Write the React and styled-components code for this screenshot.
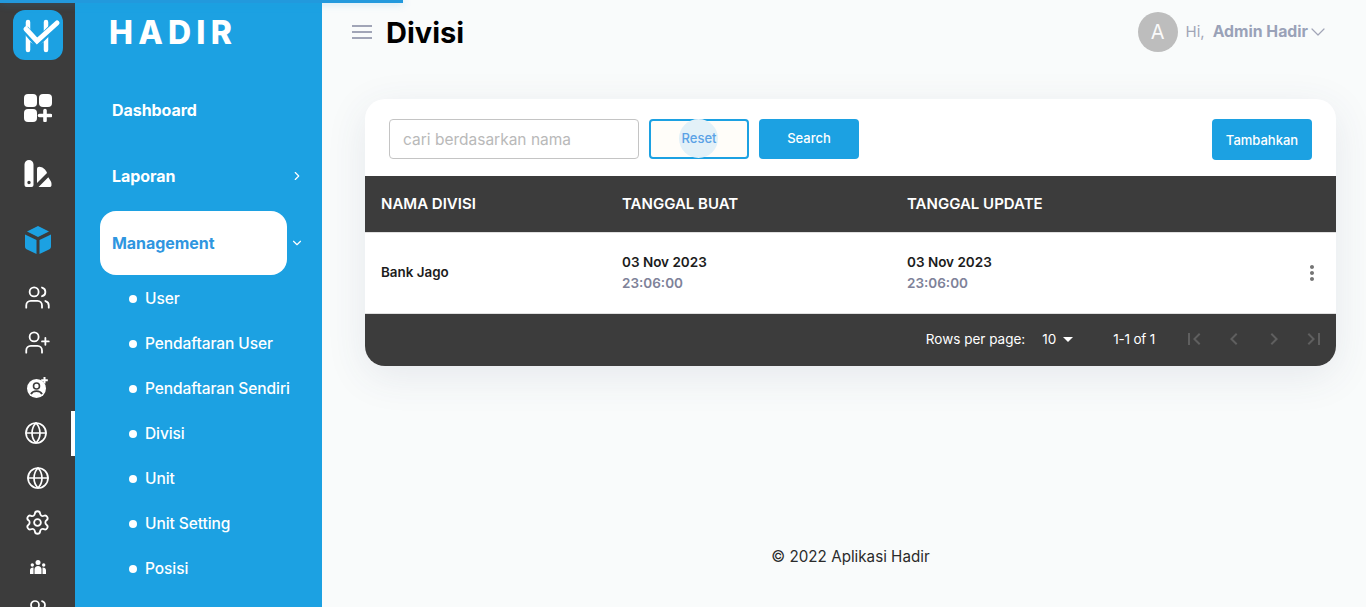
import React from "react";
import styled, { createGlobalStyle } from "styled-components";
import { Users, UserPlus, Globe, Settings, ChevronRight, ChevronDown } from "lucide-react";
import { MdFirstPage, MdLastPage, MdChevronLeft, MdChevronRight, MdArrowDropDown, MdMoreVert } from "react-icons/md";

const GlobalStyle = createGlobalStyle`
  html, body {
    margin: 0;
    padding: 0;
    height: 607px;
    overflow: hidden;
    font-family: "Inter", "Liberation Sans", sans-serif;
    background: #f9fbfb;
  }
  * { box-sizing: border-box; }
`;

const Page = styled.div`
  display: flex;
  height: 607px;
  position: relative;
  overflow: hidden;
`;
const ProgressBar = styled.div`
  position: absolute;
  top: 0;
  left: 0;
  width: 403px;
  height: 3px;
  background: #2299dd;
  box-shadow: 0 0 8px rgba(34, 153, 221, 0.4);
  z-index: 5;
`;
const Rail = styled.nav`
  width: 75px;
  flex-shrink: 0;
  background: #3c3c3c;
  padding-top: 10px;
  display: flex;
  flex-direction: column;
  color: #fff;
`;
const LogoBox = styled.div`
  width: 50px;
  height: 50px;
  margin: 0 0 15px 13px;
  border-radius: 12px;
  background: #1ca1e2;
`;
const RailSlot = styled.div`
  height: ${(p) => p.$h || 45}px;
  flex-shrink: 0;
  display: flex;
  align-items: center;
  justify-content: center;
  position: relative;
  margin-top: ${(p) => p.$mt || 0}px;
  padding-bottom: ${(p) => p.$pb || 0}px;
  padding-right: ${(p) => (p.$active ? 3 : 0)}px;
  &::after {
    content: "";
    display: ${(p) => (p.$active ? "block" : "none")};
    position: absolute;
    right: 0;
    top: 0;
    bottom: 0;
    width: 4px;
    background: #fff;
  }
`;
const Menu = styled.aside`
  width: 247px;
  flex-shrink: 0;
  background: #1ca1e2;
  color: #fff;
  display: flex;
  flex-direction: column;
`;
const Brand = styled.div`
  height: 78px;
  padding: 14px 0 0 34px;
  font-size: 32px;
  line-height: 38px;
  font-weight: 800;
  letter-spacing: 5.2px;
`;
const MenuItem = styled.div`
  height: 64px;
  margin: ${(p) => (p.$active ? "1px 0 1px 25px" : "0 16px 2px 25px")};
  width: ${(p) => (p.$active ? "187px" : "auto")};
  padding-left: 12px;
  display: flex;
  align-items: center;
  justify-content: space-between;
  position: relative;
  border-radius: 16px;
  background: ${(p) => (p.$active ? "#fff" : "transparent")};
  color: ${(p) => (p.$active ? "#2f96e0" : "#fff")};
  font-size: 16px;
  font-weight: 700;
  letter-spacing: -0.05px;
  svg { display: block; }
`;
const ItemCaret = styled.span`
  margin-right: 2px;
`;
const Caret = styled.span`
  position: absolute;
  right: -17px;
  top: 25px;
  color: #fff;
`;
const SubItem = styled.div`
  height: 45px;
  padding-left: 54px;
  display: flex;
  align-items: center;
  gap: 8px;
  font-size: 15.5px;
  font-weight: 500;
  letter-spacing: -0.08px;
  white-space: nowrap;
  &::before {
    content: "";
    width: 8px;
    height: 8px;
    border-radius: 50%;
    background: #fff;
  }
`;
const Main = styled.main`
  flex: 1;
  min-width: 0;
  display: flex;
  flex-direction: column;
`;
const TopBar = styled.header`
  height: 99px;
  padding: 12px 30px 0 30px;
  display: flex;
  align-items: flex-start;
  justify-content: space-between;
`;
const TitleGroup = styled.div`
  display: flex;
  align-items: center;
  gap: 14px;
  height: 40px;
`;
const Title = styled.h1`
  margin: 0;
  padding-top: 2px;
  font-size: 29px;
  line-height: 40px;
  font-weight: 700;
  color: #000;
`;
const UserBox = styled.div`
  display: flex;
  align-items: center;
  height: 40px;
  margin-right: 6px;
  color: #a1a5b7;
  font-size: 15px;
  line-height: 38px;
`;
const Avatar = styled.div`
  width: 40px;
  height: 40px;
  border-radius: 50%;
  background: #bdbdbd;
  color: #fafafa;
  font-size: 20px;
  display: flex;
  align-items: center;
  justify-content: center;
  margin-right: 8px;
`;
const UserName = styled.span`
  font-weight: 700;
  font-size: 15.8px;
  margin: 0 -2px 0 8px;
  color: #9aa2b8;
`;
const Card = styled.section`
  margin: 0 30px 0 43px;
  height: 267px;
  background: #fff;
  border-radius: 20px;
  box-shadow: 0 10px 40px rgba(60, 70, 110, 0.1);
  overflow: hidden;
  display: flex;
  flex-direction: column;
`;
const Toolbar = styled.div`
  height: 77px;
  flex-shrink: 0;
  padding: 20px 24px 0;
  display: flex;
  align-items: flex-start;
  gap: 10px;
`;
const SearchInput = styled.input`
  width: 250px;
  height: 40px;
  border: 1px solid #c4c4c4;
  border-radius: 4px;
  padding: 0 13px;
  font: 400 15.5px "Inter", sans-serif;
  color: #333;
  outline: none;
  &::placeholder { color: #b9b9b9; opacity: 1; }
`;
const Button = styled.button`
  width: 100px;
  height: ${(p) => (p.$tall ? 41 : 40)}px;
  margin-left: ${(p) => (p.$push ? "auto" : 0)};
  padding: 0 0 ${(p) => (p.$tall ? 0 : 2)}px;
  border-radius: 4px;
  border: ${(p) => (p.$outline ? "2px solid #1ca1e2" : "none")};
  background: ${(p) => (p.$outline ? "#fffdf9" : "#1ca1e2")};
  color: ${(p) => (p.$outline ? "#5aa2e6" : "#fff")};
  font: 500 13px "Inter", sans-serif;
  position: relative;
  z-index: 0;
  &::before {
    content: "";
    display: ${(p) => (p.$outline ? "block" : "none")};
    position: absolute;
    left: 50%;
    top: 50%;
    width: 39px;
    height: 39px;
    margin: -20px 0 0 -20px;
    border-radius: 50%;
    background: #e3f1f8;
    z-index: -1;
  }
`;
const Grid = styled.div`
  display: grid;
  grid-template-columns: 241px 285px 1fr 48px;
`;
const HeadRow = styled(Grid)`
  height: 57px;
  flex-shrink: 0;
  padding-bottom: 2px;
  background: #3c3c3c;
  color: #fff;
  align-items: center;
  font-size: 15px;
  font-weight: 600;
  border-bottom: 1px solid #e0e0e0;
`;
const BodyRow = styled(Grid)`
  height: 81px;
  flex-shrink: 0;
  align-items: center;
  border-bottom: 1px solid #e0e0e0;
`;
const Cell = styled.div`
  padding-left: 16px;
  padding-bottom: ${(p) => p.$pb || 0}px;
  font-size: 13.4px;
  font-weight: 600;
  color: #1c1c1c;
`;
const HeadCell = styled.div`
  padding-left: 16px;
`;
const DateLine = styled.div`
  font-size: 13.5px;
  line-height: 21px;
  font-weight: 600;
  color: ${(p) => (p.$muted ? "#7e8299" : "#1c1c1c")};
`;
const ActionCell = styled.div`
  color: #757575;
  display: flex;
  justify-content: center;
`;
const Pager = styled.div`
  flex: 1;
  background: #3c3c3c;
  color: #fff;
  display: flex;
  align-items: center;
  justify-content: flex-end;
  padding: 0 2px 2px 0;
  font-size: 13.5px;
  svg { display: block; }
`;
const RowsValue = styled.span`
  display: flex;
  align-items: center;
  margin: 0 26px 0 17px;
  width: 45px;
`;
const PagerButton = styled.span`
  width: 40px;
  display: flex;
  justify-content: center;
  color: #5f5f5f;
`;
const PagerCount = styled.span`
  margin-right: 19px;
  letter-spacing: -0.2px;
`;
const Footer = styled.footer`
  margin-top: 181px;
  margin-left: 43px;
  width: 971px;
  text-align: center;
  font-size: 15.2px;
  color: #2b2b2b;
`;

function LogoMark() {
  return (
    <svg width="50" height="50" viewBox="0 0 50 50">
      <path d="M15 12v28M33 12v28" stroke="#fff" strokeWidth="4.5" strokeLinecap="round" />
      <path d="M15 29.500 24 35 33 29.500" stroke="#fff" strokeWidth="2" fill="none" />
      <path d="M12 19 24 33 45 12" stroke="#1ca1e2" strokeWidth="7.500" fill="none" />
      <path d="M13 19 24 31 44 13" stroke="#fff" strokeWidth="5" strokeLinecap="round" fill="none" />
    </svg>
  );
}

function AppsIcon() {
  return (
    <svg width="28" height="28" viewBox="0 0 28 28" fill="#fff">
      <rect x="0" y="0" width="13" height="13" rx="4" />
      <rect x="15" y="0" width="13" height="13" rx="4" />
      <rect x="0" y="15" width="13" height="13" rx="4" />
      <path d="M21 16.500v10M15.500 21.500h11" stroke="#fff" strokeWidth="3.600" strokeLinecap="round" />
    </svg>
  );
}

function SwatchIcon() {
  return (
    <svg width="28" height="28" viewBox="0 0 28 28" fill="#fff">
      <path d="M5 0a4.500 4.500 0 0 1 4.500 4.500V25a2 2 0 0 1-2 2H2.500a2 2 0 0 1-2-2V4.500A4.500 4.500 0 0 1 5 0zm0 20.800a1.700 1.700 0 1 0 0 3.400 1.700 1.700 0 0 0 0-3.400z" fillRule="evenodd" />
      <path d="M13 9c0-1.500 1-2.200 2.300-2.200 3.200 0 6.700 3 7.700 6.200L13 23z" />
      <path d="M14.500 27 24.300 17.300 26.800 21.200c.8 1.200.7 2.800.7 3.800 0 1.400-.8 2-2 2z" />
    </svg>
  );
}

function CubeIcon() {
  return (
    <svg width="26" height="28" viewBox="0 0 26 28" fill="#1ca1e2">
      <path d="M13 0 24 5.500 13 11 2 5.500z" />
      <path d="M0 8.500 11.500 14v14L2 23.500c-1.300-.6-2-1.500-2-3z" />
      <path d="M26 8.500 14.500 14v14L24 23.500c1.300-.6 2-1.500 2-3z" />
    </svg>
  );
}

function PersonPlusIcon() {
  return (
    <svg width="24" height="24" viewBox="0 0 24 24" fill="none">
      <circle cx="10.500" cy="12.500" r="9.500" fill="#fff" />
      <circle cx="10.500" cy="10" r="3" stroke="#3c3c3c" strokeWidth="1.600" />
      <path d="M5 18.200c1-2.200 3-3 5.500-3s4.500.8 5.500 3" stroke="#3c3c3c" strokeWidth="1.800" />
      <path d="M18.500 1v6.500M15.200 4.200h6.600" stroke="#fff" strokeWidth="2" />
    </svg>
  );
}

function TeamIcon() {
  return (
    <svg width="16" height="14" viewBox="0 0 16 14" fill="#fff">
      <circle cx="8" cy="2.500" r="2.500" />
      <circle cx="2.300" cy="5" r="1.700" />
      <circle cx="13.700" cy="5" r="1.700" />
      <path d="M4.500 14V9.500C4.500 7.500 6 6 8 6s3.500 1.500 3.500 3.500V14z" />
      <path d="M0 14v-3.500C0 8.500 1 7.500 3.500 7.500V14zM16 14v-3.500c0-2-1-3-3.500-3V14z" />
    </svg>
  );
}

function MenuIcon() {
  return (
    <svg width="20" height="14" viewBox="0 0 20 14" fill="#a1a5b7">
      <rect y="0" width="20" height="2" />
      <rect y="6" width="20" height="2" />
      <rect y="12" width="20" height="2" />
    </svg>
  );
}

const subItems = ["User", "Pendaftaran User", "Pendaftaran Sendiri", "Divisi", "Unit", "Unit Setting", "Posisi"];

export default function App() {
  return (
    <Page>
      <GlobalStyle />
      <ProgressBar />
      <Rail>
        <LogoBox><LogoMark /></LogoBox>
        <RailSlot $h={66}><AppsIcon /></RailSlot>
        <RailSlot $h={65}><SwatchIcon /></RailSlot>
        <RailSlot $h={67}><CubeIcon /></RailSlot>
        <RailSlot $mt={3} $pb={2}><Users size={27} strokeWidth={1.6} /></RailSlot>
        <RailSlot $pb={2}><UserPlus size={27} strokeWidth={1.6} /></RailSlot>
        <RailSlot $pb={2}><PersonPlusIcon /></RailSlot>
        <RailSlot $pb={2} $active><Globe size={24} strokeWidth={1.7} /></RailSlot>
        <RailSlot $pb={2}><Globe size={24} strokeWidth={1.7} /></RailSlot>
        <RailSlot $pb={2}><Settings size={27} strokeWidth={1.6} /></RailSlot>
        <RailSlot $h={41}><TeamIcon /></RailSlot>
        <RailSlot $pb={0}><Users size={24} strokeWidth={1.7} /></RailSlot>
      </Rail>
      <Menu>
        <Brand>HADIR</Brand>
        <MenuItem>Dashboard</MenuItem>
        <MenuItem>Laporan<ItemCaret><ChevronRight size={14} /></ItemCaret></MenuItem>
        <MenuItem $active>
          Management
          <Caret><ChevronDown size={14} /></Caret>
        </MenuItem>
        {subItems.map((item) => (
          <SubItem key={item}>{item}</SubItem>
        ))}
      </Menu>
      <Main>
        <TopBar>
          <TitleGroup>
            <MenuIcon />
            <Title>Divisi</Title>
          </TitleGroup>
          <UserBox>
            <Avatar>A</Avatar>
            Hi,
            <UserName>Admin Hadir</UserName>
            <ChevronDown size={24} strokeWidth={1.2} />
          </UserBox>
        </TopBar>
        <Card>
          <Toolbar>
            <SearchInput placeholder="cari berdasarkan nama" />
            <Button $outline>Reset</Button>
            <Button>Search</Button>
            <Button $push $tall>Tambahkan</Button>
          </Toolbar>
          <HeadRow>
            <HeadCell>NAMA DIVISI</HeadCell>
            <HeadCell>TANGGAL BUAT</HeadCell>
            <HeadCell>TANGGAL UPDATE</HeadCell>
            <span />
          </HeadRow>
          <BodyRow>
            <Cell $pb={2}>Bank Jago</Cell>
            <Cell>
              <DateLine>03 Nov 2023</DateLine>
              <DateLine $muted>23:06:00</DateLine>
            </Cell>
            <Cell>
              <DateLine>03 Nov 2023</DateLine>
              <DateLine $muted>23:06:00</DateLine>
            </Cell>
            <ActionCell><MdMoreVert size={24} /></ActionCell>
          </BodyRow>
          <Pager>
            Rows per page:
            <RowsValue>10<MdArrowDropDown size={24} /></RowsValue>
            <PagerCount>1-1 of 1</PagerCount>
            <PagerButton><MdFirstPage size={24} /></PagerButton>
            <PagerButton><MdChevronLeft size={24} /></PagerButton>
            <PagerButton><MdChevronRight size={24} /></PagerButton>
            <PagerButton><MdLastPage size={24} /></PagerButton>
          </Pager>
        </Card>
        <Footer>© 2022 Aplikasi Hadir</Footer>
      </Main>
    </Page>
  );
}
